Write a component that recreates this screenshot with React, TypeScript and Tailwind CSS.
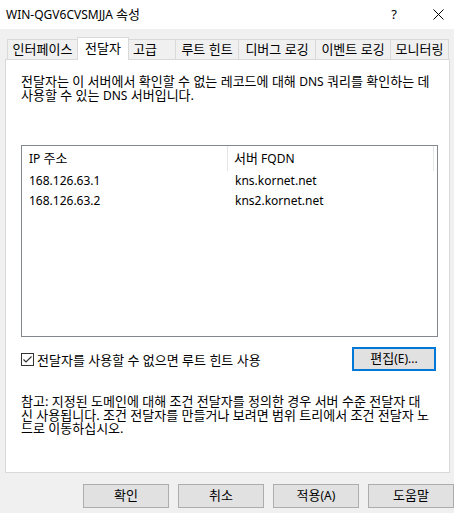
import React from "react";

const font = { fontFamily: '"Noto Sans", "Noto Sans CJK KR", sans-serif' };

function L({ children }: { children: React.ReactNode }) {
  return <span className="text-[12px]">{children}</span>;
}

function Tab({ label, w, selected, cls }: { label: string; w: string; selected?: boolean; cls?: string }) {
  return (
    <div
      className={
        selected
          ? `${w} h-[23px] -mb-px relative z-10 bg-white border-l border-t border-r border-[#d9d9d9] flex items-center justify-center pb-px`
          : `${w} h-[20px] border-t border-[#d9d9d9] flex items-center ${cls ?? "border-l justify-center"}`
      }
    >
      <span className="whitespace-nowrap text-[13px]">{label}</span>
    </div>
  );
}

export default function App() {
  return (
    <div className="w-[454px] h-[513px] bg-[#f0f0f0] text-[13px] text-black flex flex-col overflow-hidden" style={font}>
      {/* title bar */}
      <div className="h-[29px] bg-white flex items-center">
        <span className="pl-[6px] flex-1 whitespace-nowrap">
          <L>WIN-QGV6CVSMJJA </L>속성
        </span>
        <span className="w-[14px] text-center text-[13px] mr-[32px]">?</span>
        <svg width="11" height="11" viewBox="0 0 11 11" className="mr-[10px]">
          <path d="M0.5 0.5 L10.5 10.5 M10.5 0.5 L0.5 10.5" stroke="#000" strokeWidth="1" />
        </svg>
      </div>

      {/* tabs */}
      <div className="pt-[8px] pl-[7px] flex items-end h-[30px]">
        <Tab label="인터페이스" w="w-[70px]" />
        <Tab label="전달자" w="w-[52px]" selected />
        <Tab label="고급" w="w-[46px]" cls="justify-start pl-[4px]" />
        <Tab label="루트 힌트" w="w-[63px]" />
        <Tab label="디버그 로깅" w="w-[77px]" />
        <Tab label="이벤트 로깅" w="w-[75px]" />
        <Tab label="모니터링" w="w-[59px]" cls="border-l border-r justify-center" />
      </div>

      {/* panel */}
      <div className="ml-[5px] w-[445px] h-[414px] bg-white border border-[#d9d9d9] pt-[15px] pl-[15px] pr-[11px] flex flex-col">
        <p className="leading-[13.5px] whitespace-nowrap">
          전달자는 이 서버에서 확인할 수 없는 레코드에 대해 <L>DNS</L> 쿼리를 확인하는 데
          <br />
          사용할 수 있는 <L>DNS</L> 서버입니다.
        </p>

        {/* list view */}
        <div className="mt-[43px] h-[192px] border border-[#828790] flex flex-col">
          <div className="h-[25px] flex">
            <div className="w-[206px] border-r border-[#e5e5e5] pl-[7px] flex items-center">
              <L>IP&nbsp;</L>주소
            </div>
            <div className="w-[206px] border-r border-[#e5e5e5] pl-[6px] flex items-center">
              서버<L>&nbsp;FQDN</L>
            </div>
          </div>
          <div className="h-[20px] flex items-center text-[12px]">
            <div className="w-[207px] pl-[7px]">168.126.63.1</div>
            <div className="pl-[6px]">kns.kornet.net</div>
          </div>
          <div className="h-[19px] flex items-center text-[12px]">
            <div className="w-[207px] pl-[7px]">168.126.63.2</div>
            <div className="pl-[6px]">kns2.kornet.net</div>
          </div>
        </div>

        {/* checkbox + edit */}
        <div className="mt-[10px] flex items-center justify-between pr-[2px]">
          <div className="flex items-center">
            <svg width="13" height="13" viewBox="0 0 13 13">
              <rect x="0.5" y="0.5" width="12" height="12" fill="#fff" stroke="#333" strokeWidth="1" />
              <path d="M2.5 6.5 L5 9 L10.5 3.5" fill="none" stroke="#333" strokeWidth="1.2" />
            </svg>
            <span className="ml-[3px] mt-[3px] whitespace-nowrap">전달자를 사용할 수 없으면 루트 힌트 사용</span>
          </div>
          <div className="w-[84px] h-[24px] bg-[#e1e1e1] border-2 border-[#0078d7] flex items-center justify-center whitespace-nowrap">
            편집<L>(E)...</L>
          </div>
        </div>

        <p className="mt-[24px] leading-[13.5px] whitespace-nowrap">
          참고: 지정된 도메인에 대해 조건 전달자를 정의한 경우 서버 수준 전달자 대
          <br />
          신 사용됩니다. 조건 전달자를 만들거나 보려면 범위 트리에서 조건 전달자 노
          <br />
          드로 이동하십시오.
        </p>
      </div>

      {/* bottom buttons */}
      <div className="mt-[11px] flex justify-end gap-[9px]">
        <div className="w-[86px] h-[24px] bg-[#e1e1e1] border border-[#adadad] flex items-center justify-center">확인</div>
        <div className="w-[86px] h-[24px] bg-[#e1e1e1] border border-[#adadad] flex items-center justify-center">취소</div>
        <div className="w-[86px] h-[24px] bg-[#e1e1e1] border border-[#adadad] flex items-center justify-center">
          적용<L>(A)</L>
        </div>
        <div className="w-[86px] h-[24px] bg-[#e1e1e1] border border-[#adadad] flex items-center justify-center">도움말</div>
      </div>
    </div>
  );
}
